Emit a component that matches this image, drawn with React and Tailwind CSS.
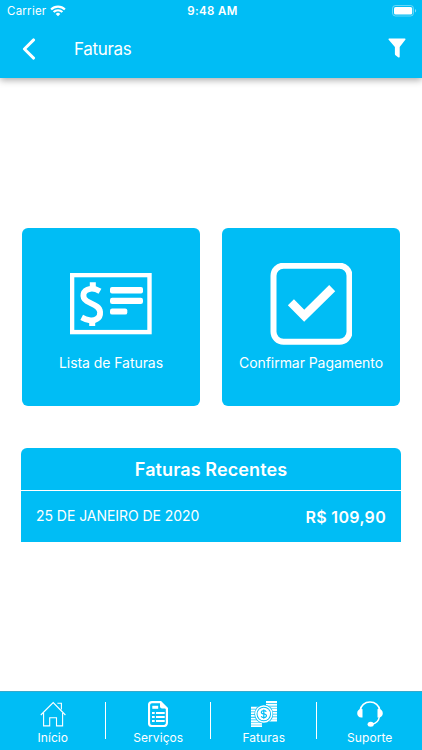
const recentInvoices = [{ date: '25 DE JANEIRO DE 2020', amount: 'R$ 109,90' }];

function WifiIcon() {
  return (
    <svg viewBox="0 0 16 12" className="h-3 w-4" fill="none" stroke="currentColor" strokeWidth="2.2">
      <path d="M1.1 4.5a9.8 9.8 0 0 1 13.8 0" />
      <path d="M3.6 7.1a6.2 6.2 0 0 1 8.8 0" />
      <path d="M8 11.2 5.7 8.9a3.3 3.3 0 0 1 4.6 0Z" fill="currentColor" stroke="none" />
    </svg>
  );
}

function BatteryIcon() {
  return (
    <svg viewBox="0 0 25 12" className="h-3 w-[25px]" fill="none">
      <rect x="0.5" y="0.5" width="21" height="10.5" rx="3" stroke="white" strokeOpacity="0.4" />
      <rect x="2" y="2" width="18.2" height="7.5" rx="1.6" fill="white" />
      <path d="M23 4v3.6a2 2 0 0 0 0-3.6Z" fill="white" fillOpacity="0.5" />
    </svg>
  );
}

function FilterIcon() {
  return (
    <svg viewBox="0 0 18 20" className="h-5 w-[18px]" fill="currentColor">
      <path d="M1.1.4h15.8c.7 0 .8.8.4 1.3L11.7 9v9.4c0 1.2-.8 1.4-1.6.8l-2.6-2c-.4-.3-.6-.6-.6-1.1V9L.7 1.7C.3 1.2.4.4 1.1.4Z" />
    </svg>
  );
}

function InvoiceListIcon() {
  return (
    <svg viewBox="0 0 82 62" className="h-[62px] w-[82px]" fill="none" stroke="white">
      <rect x="2.1" y="2.1" width="77.4" height="57" strokeWidth="4.4" />
      <path d="M30 18.2C26.5 16.2 23.5 15.2 20.2 15.8c-7.9 1.2-8.8 8.7-3.4 12.3 4.4 2.9 12.7 4.1 13.3 10.8.6 7-6 9.4-10.9 8.3-2.7-.5-5-1.5-7.5-2.8" strokeWidth="5.8" />
      <path d="M22.8 9.2v7M22.2 46v7" strokeWidth="6" />
      <g fill="white" stroke="none">
        <rect x="40" y="14" width="33" height="6.4" rx="2" />
        <rect x="40" y="24.8" width="33" height="6.2" rx="2.2" />
        <rect x="40" y="35.4" width="17.3" height="6.2" rx="2.2" />
      </g>
    </svg>
  );
}

function ConfirmIcon() {
  return (
    <svg viewBox="0 0 82 82" className="h-[82px] w-[82px]" fill="none" stroke="white">
      <rect x="3.5" y="2.7" width="76" height="76" rx="10" strokeWidth="6" />
      <path d="M20.9 39.3 34.2 52.7 62.2 25.1" strokeWidth="8.6" />
    </svg>
  );
}

function HomeIcon() {
  return (
    <svg viewBox="0 0 26 26" className="size-[26px]" fill="none" stroke="currentColor" strokeWidth="1.1">
      <path d="M.8 14 13.2 1.6 25.4 14" />
      <path d="M3.6 12v12.9h6.1v-8.1h6.8v8.1h6.1V12" />
      <path d="M17.4 2.3h4v6.2" />
    </svg>
  );
}

function ServicesIcon() {
  return (
    <svg viewBox="0 0 20 26" className="h-[26px] w-5" fill="none" stroke="currentColor">
      <path d="M4 1.1h8.6l6.3 6.3V22a3 3 0 0 1-3 3H4a3 3 0 0 1-3-3V4a3 3 0 0 1 3-2.9Z" strokeWidth="2.2" />
      <path d="M12 0v5.5a2 2 0 0 0 2 2h6Z" fill="currentColor" stroke="none" />
      <path d="M4.3 4.8h5.9v3H4.3Z" fill="currentColor" stroke="none" />
      <path d="M4 12h2.7M8 12h8.7M4 16h2.7M8 16h8.7M4 20h2.7M8 20h8.7" strokeWidth="2.2" />
    </svg>
  );
}

function CoinsIcon() {
  return (
    <svg viewBox="0 0 26 26" className="size-[26px]" fill="none" stroke="currentColor">
      <path d="M15 1h11M15 3.7h11M15 6.4h11M19 9.1h7M20 11.8h6M20 14.5h6M20 17.2h6M18 19.6h8" strokeWidth="2" />
      <path d="M0 6.8h9M0 9.5h7M0 12.2h6M0 14.9h6M0 17.6h7M0 20.3h9M0 22.8h11M0 25.2h11" strokeWidth="1.9" />
      <circle cx="12.8" cy="13" r="9.4" className="fill-[#00bdf5]" stroke="none" />
      <circle cx="12.8" cy="13" r="8" strokeWidth="1.5" />
      <circle cx="12.8" cy="13" r="6.3" fill="currentColor" stroke="none" />
      <path d="M15.3 10.8c-.5-.8-1.3-1.2-2.5-1.2-3.1 0-3.3 2.7-.9 3.2l1.8.4c2.7.6 2.2 3.4-.9 3.4-1.3 0-2.2-.5-2.6-1.3M12.8 8.4v9.3" className="stroke-[#00bdf5]" strokeWidth="1.2" />
    </svg>
  );
}

function SupportIcon() {
  return (
    <svg viewBox="0 0 26 26" className="size-[26px]" fill="none" stroke="currentColor">
      <path d="M3.2 9.3C3.8 4.3 7.8 1 13 1s9.2 3.3 9.8 8.3" strokeWidth="1.6" />
      <path d="M5.5 8.2v8.2C2.3 17 .2 15 .2 12.3s2.1-4.7 5.3-4.1ZM20.5 8.2v8.2c3.2.6 5.3-1.4 5.3-4.1s-2.1-4.7-5.3-4.1Z" fill="currentColor" stroke="none" />
      <path d="M22.4 15.5c-.6 4.4-3.5 7.2-7.7 7.7" strokeWidth="1.5" />
      <ellipse cx="13.7" cy="23.3" rx="3.1" ry="2.5" fill="currentColor" stroke="none" />
    </svg>
  );
}

const actions = [
  { name: 'Lista de Faturas', icon: InvoiceListIcon },
  { name: 'Confirmar Pagamento', icon: ConfirmIcon },
];

const tabs = [
  { name: 'Início', icon: HomeIcon },
  { name: 'Serviços', icon: ServicesIcon },
  { name: 'Faturas', icon: CoinsIcon },
  { name: 'Suporte', icon: SupportIcon },
];

export default function App() {
  return (
    <div className="flex h-[750px] w-[422px] flex-col overflow-hidden bg-white font-['Inter',sans-serif] text-white">
      <header className="h-[78px] shrink-0 bg-[#00bdf5] shadow-[0_2px_7px_rgba(0,0,0,0.35)]">
        <div className="grid h-[22px] grid-cols-[1fr_auto_1fr] items-center pr-1 pl-[7px] text-[11.5px] leading-none">
          <div className="flex items-center gap-1">
            <span className="pt-0.5 tracking-[0.25px]">Carrier</span>
            <WifiIcon />
          </div>
          <span className="pt-0.5 text-center font-semibold tracking-[0.4px] whitespace-nowrap">9:48 AM</span>
          <div className="flex justify-end pr-px">
            <BatteryIcon />
          </div>
        </div>
        <div className="flex h-[54px] items-center pr-4 pl-[22px]">
          <svg viewBox="0 0 14 22" className="h-[22px] w-3.5" fill="none" stroke="currentColor" strokeWidth="2.9" strokeLinecap="round" strokeLinejoin="round">
            <path d="M11.6 1.9 2.4 11l9.2 9.1" />
          </svg>
          <h1 className="ml-[38px] pt-px text-[17px] leading-none tracking-[-0.35px]">Faturas</h1>
          <div className="mb-0.5 ml-auto">
            <FilterIcon />
          </div>
        </div>
      </header>

      <main className="flex-1 px-[21px] pt-[150px]">
        <div className="flex justify-between px-px">
          {actions.map(({ name, icon: Icon }) => (
            <button key={name} className="flex size-[178px] flex-col items-center rounded-md bg-[#00bdf5] pt-[34px]">
              <span className="flex h-[83px] items-center">
                <Icon />
              </span>
              <span className="mt-[11px] text-[14px] leading-[14px] tracking-[-0.06px] whitespace-nowrap">{name}</span>
            </button>
          ))}
        </div>

        <section className="mt-[42px] overflow-hidden rounded-t-md bg-[#00bdf5]">
          <h2 className="flex h-[43px] items-center justify-center border-b border-white text-[18px] font-semibold tracking-[0.1px]">Faturas Recentes</h2>
          {recentInvoices.map((invoice) => (
            <div key={invoice.date} className="flex h-[51px] items-center justify-between px-[15px]">
              <span className="pb-[3px] text-[14px] tracking-[-0.05px]">{invoice.date}</span>
              <span className="text-[16px] font-semibold tracking-[0.3px]">{invoice.amount}</span>
            </div>
          ))}
        </section>
      </main>

      <nav className="flex h-[59px] shrink-0 border-t border-[#35a9cb] bg-[#00bdf5]">
        {tabs.map(({ name, icon: Icon }, index) => (
          <div key={name} className="flex flex-1 items-start">
            <div className="flex flex-1 flex-col items-center pt-[9px] pl-px">
              <Icon />
              <span className="mt-1 text-[12px] leading-[14px] tracking-[0.08px]">{name}</span>
            </div>
            {index < tabs.length - 1 && <span className="mt-2.5 h-[37px] w-px bg-white" />}
          </div>
        ))}
      </nav>
    </div>
  );
}
